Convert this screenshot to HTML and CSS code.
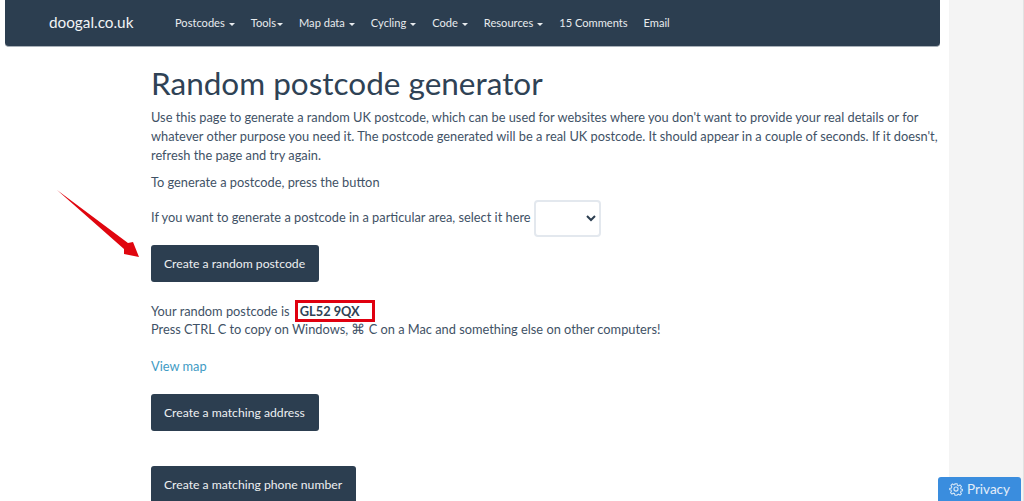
FILE: index.html
```html
<!DOCTYPE html>
<html lang="en">
<head>
<meta charset="utf-8">
<title>Random postcode generator</title>
<link rel="stylesheet" href="styles.css">
</head>
<body>
<div class="page">
  <nav class="navbar">
    <a class="brand" href="#">doogal.co.uk</a>
    <ul class="menu">
      <li class="caret">Postcodes</li>
      <li class="caret tight">Tools</li>
      <li class="caret">Map data</li>
      <li class="caret">Cycling</li>
      <li class="caret">Code</li>
      <li class="caret">Resources</li>
      <li>15 Comments</li>
      <li>Email</li>
    </ul>
  </nav>
  <main class="content">
    <h1>Random postcode generator</h1>
    <p class="intro">Use this page to generate a random UK postcode, which can be used for websites where you don't want to provide your real details or for whatever other purpose you need it. The postcode generated will be a real UK postcode. It should appear in a couple of seconds. If it doesn't, refresh the page and try again.</p>
    <p class="press">To generate a postcode, press the button</p>
    <p class="area">If you want to generate a postcode in a particular area, select it here <select class="picker"><option></option></select></p>
    <button class="btn" type="button">Create a random postcode</button>
    <p class="result">Your random postcode is <strong class="code">GL52 9QX</strong><br>Press CTRL C to copy on Windows, <span class="cmd">⌘</span> C on a Mac and something else on other computers!</p>
    <a class="maplink" href="#">View map</a>
    <button class="btn second" type="button">Create a matching address</button>
    <button class="btn third" type="button">Create a matching phone number</button>
  </main>
</div>
<aside class="gutter"></aside>
<svg class="arrow" width="90" height="75" viewBox="0 0 90 75" aria-hidden="true">
  <path d="M1 1 L72 54 L77 53 L83 68 L68 65 L68 60 Z" fill="#e0060f"/>
</svg>
<div class="privacy">
  <svg width="14" height="14" viewBox="0 0 24 24" fill="none" stroke="#d5e6f7" stroke-width="2" aria-hidden="true"><circle cx="12" cy="12" r="3.5"/><path d="M10 2h4l.7 3.2 2.1.9 2.8-1.7 2.8 2.8-1.7 2.8.9 2.1 3.2.7v2.4l-3.2.7-.9 2.1 1.7 2.8-2.8 2.8-2.8-1.7-2.1.9L14 24h-4l-.7-3.2-2.1-.9-2.8 1.7-2.8-2.8 1.7-2.8-.9-2.1L0 13.2v-2.4l3.2-.7.9-2.1-1.7-2.8 2.8-2.8 2.8 1.7 2.1-.9z" transform="translate(1.2 1.2) scale(.9)"/></svg>
  <span>Privacy</span>
</div>
</body>
</html>
```
FILE: styles.css
```css
* { box-sizing: border-box; }
html, body { height: 501px; overflow: hidden; }
body {
  margin: 0;
  display: flex;
  font-family: Lato, "Liberation Sans", sans-serif;
  font-size: 12.8px;
  line-height: 19px;
  color: #3f5266;
  background: #fff;
}
.page { width: 949px; flex: none; }
.gutter { flex: 1; background: #f4f4f4; border-right: 1px solid #e2e2e2; }
.navbar {
  margin-left: 5px;
  width: 935px;
  height: 47px;
  background: #2c3e50;
  border-bottom: 1px solid #a9b1b9;
  border-radius: 0 0 4px 4px;
  display: flex;
  align-items: center;
  padding: 0 0 1px 44px;
  color: #fff;
}
.brand { color: #f1f3f5; font-size: 15.3px; text-decoration: none; width: 126px; flex: none; }
.menu { list-style: none; margin: 0; padding: 0; display: flex; gap: 16px; font-size: 11.1px; color: #e8ebee; }
.caret::after {
  content: "";
  display: inline-block;
  vertical-align: middle;
  margin-left: 4px;
  border-top: 3px solid #e8ebee;
  border-left: 3px solid transparent;
  border-right: 3px solid transparent;
}
.tight::after { margin-left: 1px; }
.content { padding: 16px 0 0 151px; width: 945px; }
h1 { margin: 0 0 5px; font-size: 31.5px; line-height: 40px; font-weight: 400; color: #2f4255; }
p { margin: 0; }
.intro { margin-bottom: 8px; }
.press { margin-bottom: 8px; }
.area { height: 36px; margin-bottom: 9px; }
.picker {
  width: 67px;
  height: 37px;
  background: #fff;
  border: 2px solid #e3e8ee;
  border-radius: 4px;
  font: inherit;
  color: #2c3e50;
  vertical-align: middle;
}
.btn {
  display: block;
  height: 37px;
  padding: 0 14px 0 13px;
  background: #2c3e50;
  color: #eef0f2;
  border: 0;
  border-radius: 3px;
  font-family: inherit;
  font-size: 12.2px;
}
.result { margin-top: 20px; line-height: 18px; }
.code {
  margin-left: 2px;
  padding: 0 12px 0 2px;
  border: 3px solid #e0000f;
  font-weight: 700;
  color: #2f4255;
}
.cmd { font-size: 13.5px; line-height: 1; font-family: "DejaVu Sans", sans-serif; font-weight: 200; }
.maplink { display: block; margin-top: 19px; color: #3f9bc4; text-decoration: none; }
.second { margin-top: 18px; }
.third { margin-top: 35px; }
.arrow { position: absolute; left: 56px; top: 189px; }
.privacy {
  position: fixed;
  left: 938px;
  top: 477px;
  width: 83px;
  height: 24px;
  background: #3a8dde;
  border-radius: 3px 3px 0 0;
  color: #e4eef9;
  font-size: 13.5px;
  display: flex;
  align-items: center;
  justify-content: center;
  gap: 4px;
}
```
